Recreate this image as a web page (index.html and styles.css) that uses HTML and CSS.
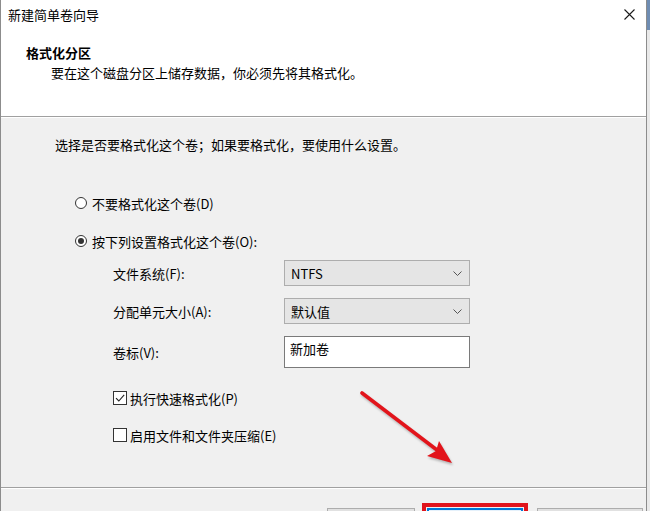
FILE: index.html
```html
<!DOCTYPE html>
<html>
	<head>
		<meta charset="utf-8">
		<title>新建简单卷向导</title>
		<link rel="stylesheet" href="styles.css">
	</head>
	<body>
		<div class="window">
			<div class="titlebar">
				<span class="caption">新建简单卷向导</span>
				<svg class="close" width="11" height="11" viewBox="0 0 11 11">
					<path d="M0.5 0.5 L10.5 10.5 M10.5 0.5 L0.5 10.5" stroke="#1a1a1a" stroke-width="1.1" fill="none"/>
				</svg>
			</div>

			<div class="header">
				<div class="page-title">格式化分区</div>
				<div class="page-desc">要在这个磁盘分区上储存数据，你必须先将其格式化。</div>
			</div>

			<div class="content">
				<p class="intro">选择是否要格式化这个卷；如果要格式化，要使用什么设置。</p>

				<div class="option first"><span class="radio"></span>不要格式化这个卷(D)</div>
				<div class="option"><span class="radio checked"></span>按下列设置格式化这个卷(O):</div>

				<div class="settings">
					<div class="field">
						<span class="field-label">文件系统(F):</span>
						<div class="combo">NTFS
							<svg class="chevron" width="9" height="5" viewBox="0 0 9 5"><path d="M0.5 0.5 L4.5 4.5 L8.5 0.5" stroke="#555" fill="none"/></svg>
						</div>
					</div>
					<div class="field">
						<span class="field-label">分配单元大小(A):</span>
						<div class="combo">默认值
							<svg class="chevron" width="9" height="5" viewBox="0 0 9 5"><path d="M0.5 0.5 L4.5 4.5 L8.5 0.5" stroke="#555" fill="none"/></svg>
						</div>
					</div>
					<div class="field">
						<span class="field-label">卷标(V):</span>
						<div class="textbox">新加卷</div>
					</div>

					<div class="check first">
						<span class="box">
							<svg width="12" height="12" viewBox="0 0 12 12"><path d="M2 6.2 L4.8 9 L10.2 2.8" stroke="#222" stroke-width="1.1" fill="none"/></svg>
						</span>执行快速格式化(P)
					</div>
					<div class="check"><span class="box"></span>启用文件和文件夹压缩(E)</div>
				</div>

				<!-- pointer to the next button -->
				<svg class="arrow" width="120" height="90" viewBox="0 0 120 90">
					<line x1="12" y1="8" x2="87" y2="65" stroke="#e2141b" stroke-width="3.6" stroke-linecap="round"/>
					<polygon points="102,78 77,71 86,66 89,56" fill="#e2141b"/>
				</svg>
			</div>

			<!-- only the top edge of the buttons is on screen -->
			<div class="footer">
				<button class="btn back" aria-label="上一步"></button>
				<button class="btn next" aria-label="下一步"></button>
				<button class="btn cancel" aria-label="取消"></button>
			</div>
		</div>
	</body>
</html>
```

FILE: styles.css
```css
html, body {
	margin: 0;
	height: 100%;
	overflow: hidden;
}
body {
	font-family: "Noto Sans CJK SC", "Noto Sans", sans-serif;
	font-size: 13px;
	color: #000;
	/* window behind the dialog */
	background: linear-gradient(to bottom, #6f8db3 0, #6f8db3 30px, #e9e9e9 30px);
}
.window {
	width: 647px;
	height: 511px;
	box-sizing: border-box;
	border-left: 1px solid #8c8c8c;
	border-right: 1px solid #8c8c8c;
	display: flex;
	flex-direction: column;
	background: #f0f0f0;
}

/* title bar */
.titlebar {
	height: 30px;
	flex: none;
	background: #fff;
	display: flex;
	align-items: center;
	justify-content: space-between;
	padding: 0 11px 0 7px;
}
.caption {
	line-height: 30px;
}
.close {
	margin-top: -1px;
}

/* white page header */
.header {
	height: 87px;
	flex: none;
	box-sizing: border-box;
	background: #fff;
	border-bottom: 1px solid #a0a0a0;
	padding-top: 14px;
}
.page-title {
	font-weight: bold;
	line-height: 18px;
	padding-left: 25px;
}
.page-desc {
	line-height: 18px;
	margin-top: 2px;
	padding-left: 50px;
}

/* page body */
.content {
	height: 370px;
	flex: none;
	position: relative;
	box-shadow: inset 0 1px #fff;
	padding: 19px 0 0 54px;
	box-sizing: border-box;
}
.intro {
	margin: 0;
	line-height: 18px;
}
.option {
	display: flex;
	align-items: center;
	height: 20px;
	margin: 18px 0 0 20px;
}
.option.first {
	margin-top: 39px;
}
.radio {
	width: 12px;
	height: 12px;
	box-sizing: border-box;
	border: 1px solid #333;
	border-radius: 50%;
	margin-right: 5px;
	display: flex;
	align-items: center;
	justify-content: center;
	background: #fff;
}
.radio.checked::after {
	content: "";
	width: 6px;
	height: 6px;
	border-radius: 50%;
	background: #333;
}

.settings {
	padding-left: 58px;
	margin-top: 9px;
	display: flex;
	flex-direction: column;
	gap: 12px;
}
.field {
	display: flex;
	align-items: center;
}
.field-label {
	width: 171px;
	flex: none;
}
.combo {
	width: 186px;
	height: 26px;
	box-sizing: border-box;
	background: #e5e5e5;
	border: 1px solid #adadad;
	display: flex;
	align-items: center;
	justify-content: space-between;
	padding: 0 7px 0 6px;
}
.textbox {
	width: 186px;
	height: 32px;
	box-sizing: border-box;
	background: #fff;
	border: 1px solid #7a7a7a;
	padding: 3px 5px;
	line-height: 18px;
}

.check {
	display: flex;
	align-items: center;
	height: 20px;
	margin-top: 5px;
}
.check.first {
	margin-top: 8px;
}
.box {
	width: 14px;
	height: 14px;
	box-sizing: border-box;
	border: 1px solid #333;
	background: #fff;
	margin-right: 3px;
	display: flex;
	align-items: center;
	justify-content: center;
}

/* red annotation arrow */
.arrow {
	position: absolute;
	left: 349px;
	top: 268px;
	filter: drop-shadow(1px 2px 1px rgba(0, 0, 0, 0.25));
}

/* button strip */
.footer {
	flex: 1;
	border-top: 1px solid #a0a0a0;
	box-shadow: inset 0 1px #fff;
	display: flex;
	align-items: flex-start;
	padding: 20px 3px 0 0;
	overflow: hidden;
}
.btn {
	height: 23px;
	flex: none;
	font: inherit;
	background: #e1e1e1;
	border: 1px solid #adadad;
	padding: 0;
}
.back {
	width: 88px;
	margin-left: auto;
}
.next {
	width: 96px;
	margin-left: 12px;
	background: #e5f1fb;
	border-color: #0078d7;
	box-shadow: inset 0 0 0 1px #0078d7;
	outline: 4px solid #e0141c;
	outline-offset: 1px;
}
.cancel {
	width: 106px;
	margin-left: 14px;
}
```
